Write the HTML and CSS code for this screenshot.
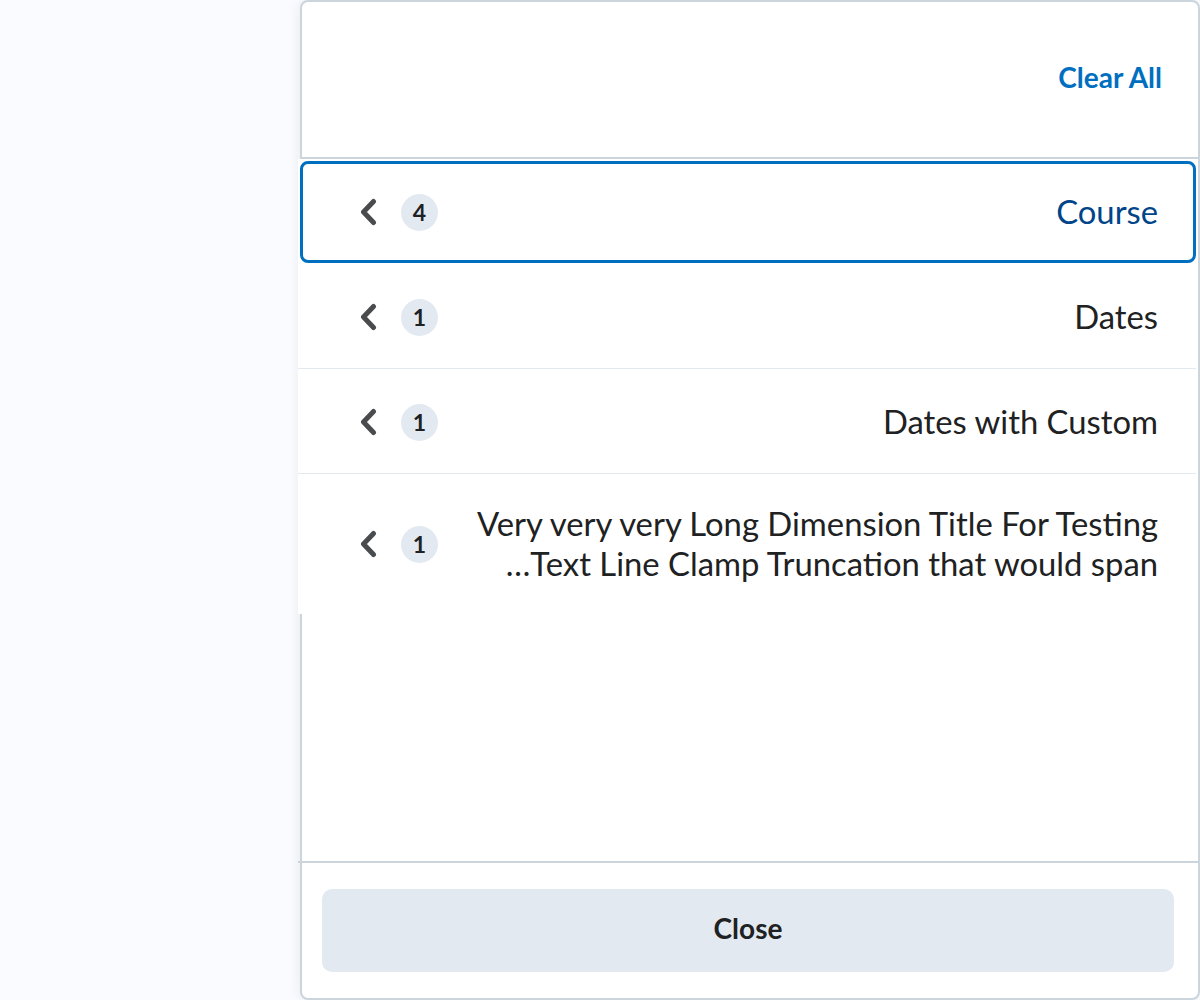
FILE: index.html
```html
<!DOCTYPE html>
<html lang="en">
<head>
<meta charset="utf-8">
<title>Filter</title>
<link rel="stylesheet" href="styles.css">
</head>
<body>
<div class="page">
  <div class="backdrop"></div>
  <section class="panel">
    <header class="panel-header">
      <button class="clear-all" type="button">Clear All</button>
    </header>
    <ul class="dimension-list">
      <li class="dimension is-focused">
        <svg class="chevron" viewBox="0 0 18 28" width="18" height="28" aria-hidden="true"><polyline points="14.5,3.5 4.5,14 14.5,24.5" /></svg>
        <span class="count">4</span>
        <span class="label">Course</span>
      </li>
      <li class="dimension">
        <svg class="chevron" viewBox="0 0 18 28" width="18" height="28" aria-hidden="true"><polyline points="14.5,3.5 4.5,14 14.5,24.5" /></svg>
        <span class="count">1</span>
        <span class="label">Dates</span>
      </li>
      <li class="dimension">
        <svg class="chevron" viewBox="0 0 18 28" width="18" height="28" aria-hidden="true"><polyline points="14.5,3.5 4.5,14 14.5,24.5" /></svg>
        <span class="count">1</span>
        <span class="label">Dates with Custom</span>
      </li>
      <li class="dimension is-multiline">
        <svg class="chevron" viewBox="0 0 18 28" width="18" height="28" aria-hidden="true"><polyline points="14.5,3.5 4.5,14 14.5,24.5" /></svg>
        <span class="count">1</span>
        <span class="label"><span class="line">Very very very Long Dimension Title For Testing</span><span class="line">…Text Line Clamp Truncation that would span</span></span>
      </li>
    </ul>
    <footer class="panel-footer">
      <button class="close" type="button">Close</button>
    </footer>
  </section>
</div>
</body>
</html>
```

FILE: styles.css
```css
* { box-sizing: border-box; }

html, body {
  margin: 0;
  padding: 0;
}

body {
  background: #f9fbff;
  font-family: Lato, "Noto Sans", sans-serif;
  color: #202122;
}

.page {
  display: flex;
  height: 1000px;
  width: 1200px;
}

.backdrop {
  width: 300px;
  flex: none;
}

.panel {
  width: 900px;
  height: 1000px;
  flex: none;
  background: #ffffff;
  border: 2px solid #cdd5dc;
  border-radius: 8px;
  box-shadow: -2px 0 12px rgba(0, 0, 0, 0.06);
  display: flex;
  flex-direction: column;
}

.panel-header {
  height: 157px;
  flex: none;
  border-bottom: 2px solid #cdd5dc;
  display: flex;
  align-items: center;
  justify-content: flex-end;
  padding: 0 36px 6px 0;
}

.clear-all {
  border: 0;
  background: none;
  padding: 0;
  font-family: inherit;
  font-weight: 700;
  font-size: 28px;
  line-height: 36px;
  color: #006fbf;
  cursor: pointer;
}

.dimension-list {
  list-style: none;
  margin: 0 2px 0 -4px;
  padding: 0;
  flex: 1;
}

.dimension {
  position: relative;
  display: flex;
  align-items: center;
  background: #ffffff;
  padding: 33px 38px 31px 61px;
  border-top: 1px solid #e3e9f1;
}

.dimension:first-child,
.dimension.is-focused + .dimension {
  border-top: 0;
}

.dimension.is-focused + .dimension {
  padding-top: 34px;
}

.dimension.is-multiline {
  padding-top: 30px;
  padding-bottom: 30px;
}

.dimension.is-focused::after {
  content: "";
  position: absolute;
  top: 2px;
  left: 2px;
  right: 0;
  bottom: 0;
  border: 3px solid #006fbf;
  border-radius: 8px;
  pointer-events: none;
}

.chevron {
  flex: none;
  fill: none;
  stroke: #494c4e;
  stroke-width: 5;
  stroke-linecap: round;
  stroke-linejoin: round;
}

.count {
  flex: none;
  width: 37px;
  height: 37px;
  margin-left: 24px;
  border-radius: 50%;
  background: #e3e9f1;
  display: flex;
  align-items: center;
  justify-content: center;
  font-size: 23px;
  font-weight: 700;
  color: #202122;
}

.label {
  flex: 1;
  margin-left: 20px;
  text-align: right;
  font-size: 32.8px;
  line-height: 40px;
  color: #202122;
}

.line {
  display: block;
  white-space: nowrap;
}

.is-focused .label {
  color: #004489;
}

.panel-footer {
  flex: none;
  border-top: 2px solid #cdd5dc;
  margin-left: -4px;
  padding: 26px 24px 26px 24px;
}

.close {
  display: block;
  width: 100%;
  height: 83px;
  border: 0;
  border-radius: 10px;
  background: #e3e9f1;
  padding: 0 0 6px;
  font-family: inherit;
  font-size: 28px;
  font-weight: 700;
  color: #202122;
  cursor: pointer;
}
```
